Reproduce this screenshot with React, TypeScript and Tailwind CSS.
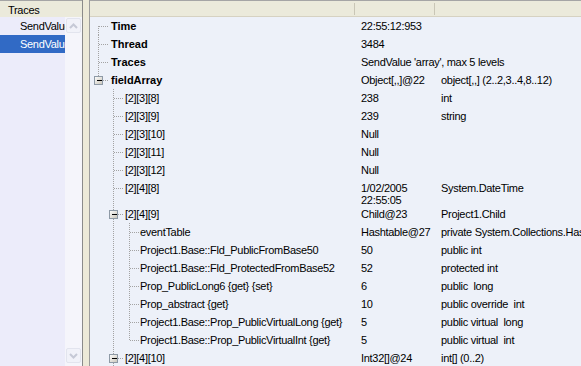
import React from 'react';

type Row = {
  label: string;
  bold?: boolean;
  level: number;
  first?: boolean;
  last?: boolean;
  box?: boolean;
  cont: boolean[];
  value?: string;
  value2?: string;
  type?: string;
};

const G = [8, 23, 39];
const TX = [21, 35, 50];

const rows: Row[] = [
  { label: 'Time', bold: true, level: 0, first: true, cont: [], value: '22:55:12:953' },
  { label: 'Thread', bold: true, level: 0, cont: [], value: '3484' },
  { label: 'Traces', bold: true, level: 0, cont: [], value: "SendValue 'array', max 5 levels" },
  { label: 'fieldArray', bold: true, level: 0, last: true, box: true, cont: [], value: 'Object[,,]@22', type: 'object[,,] (2..2,3..4,8..12)' },
  { label: '[2][3][8]', level: 1, cont: [false], value: '238', type: 'int' },
  { label: '[2][3][9]', level: 1, cont: [false], value: '239', type: 'string' },
  { label: '[2][3][10]', level: 1, cont: [false], value: 'Null' },
  { label: '[2][3][11]', level: 1, cont: [false], value: 'Null' },
  { label: '[2][3][12]', level: 1, cont: [false], value: 'Null' },
  { label: '[2][4][8]', level: 1, cont: [false], value: '1/02/2005', value2: '22:55:05', type: 'System.DateTime' },
  { label: '[2][4][9]', level: 1, box: true, cont: [false], value: 'Child@23', type: 'Project1.Child' },
  { label: 'eventTable', level: 2, cont: [false, true], value: 'Hashtable@27', type: 'private System.Collections.Hashtable' },
  { label: 'Project1.Base::Fld_PublicFromBase50', level: 2, cont: [false, true], value: '50', type: 'public int' },
  { label: 'Project1.Base::Fld_ProtectedFromBase52', level: 2, cont: [false, true], value: '52', type: 'protected int' },
  { label: 'Prop_PublicLong6 {get} {set}', level: 2, cont: [false, true], value: '6', type: 'public  long' },
  { label: 'Prop_abstract {get}', level: 2, cont: [false, true], value: '10', type: 'public override  int' },
  { label: 'Project1.Base::Prop_PublicVirtualLong {get}', level: 2, cont: [false, true], value: '5', type: 'public virtual  long' },
  { label: 'Project1.Base::Prop_PublicVirtualInt {get}', level: 2, last: true, cont: [false, true], value: '5', type: 'public virtual  int' },
  { label: '[2][4][10]', level: 1, box: true, cont: [false], value: 'Int32[]@24', type: 'int[] (0..2)' },
];

const TreeLines = ({ r, h }: { r: Row; h: number }) => {
  const y = 9;
  const gx = G[r.level];
  const dash = { stroke: '#a3a3a3', strokeWidth: 1, strokeDasharray: '1 1' };
  return (
    <svg width={TX[r.level]} height={h} className="shrink-0" shapeRendering="crispEdges">
      {r.cont.map((c, i) =>
        c ? <line key={i} x1={G[i] + 0.5} y1={0} x2={G[i] + 0.5} y2={h} {...dash} /> : null
      )}
      <line x1={gx + 0.5} y1={r.first ? y : 0} x2={gx + 0.5} y2={r.last ? y : h} {...dash} />
      <line x1={gx + 1} y1={y + 0.5} x2={gx + 10} y2={y + 0.5} {...dash} />
      {r.box && (
        <g>
          <defs>
            <linearGradient id="bx" x1="0" y1="0" x2="1" y2="1">
              <stop offset="0" stopColor="#ffffff" />
              <stop offset="1" stopColor="#c8c4b8" />
            </linearGradient>
          </defs>
          <rect x={gx - 3.5} y={y - 3.5} width={8} height={8} fill="url(#bx)" stroke="#8e9aa6" />
          <line x1={gx - 1} y1={y + 0.5} x2={gx + 4} y2={y + 0.5} stroke="#000" />
        </g>
      )}
    </svg>
  );
};

const ScrollBtn = ({ down }: { down?: boolean }) => (
  <div className="h-[17px] w-[17px] p-px">
    <div className="flex h-full w-full items-center justify-center rounded-[2px] border border-[#e2e4ee] bg-[#f1f2f9]">
      <svg width="9" height="6" viewBox="0 0 9 6">
        <polyline
          points={down ? '1,1 4.5,4.5 8,1' : '1,5 4.5,1.5 8,5'}
          fill="none"
          stroke="#c6c9d6"
          strokeWidth="2"
        />
      </svg>
    </div>
  </div>
);

export default function App() {
  return (
    <div
      className="flex h-[366px] w-[581px] overflow-hidden bg-[#ece9d8] text-[11px] text-black"
      style={{ fontFamily: '"Liberation Sans", Arial, sans-serif' }}
    >
      {/* traces list */}
      <div className="flex w-[83px] shrink-0 flex-col border-r border-[#8a8a8a]">
        <div className="h-[17px] shrink-0 border-t border-[#a5a5a5] bg-[#ebeadb] pl-[8px] pt-[3px] leading-[12px] tracking-[-0.3px]">
          Traces
        </div>
        <div className="flex flex-1">
          <div className="w-[65px] overflow-hidden bg-[#ececfa] tracking-[-0.3px]">
            <div className="h-[18px] whitespace-nowrap pl-[20px] pt-[3px] leading-[12px]">SendValue</div>
            <div className="h-[18px] whitespace-nowrap bg-[#316ac5] pl-[20px] pt-[3px] leading-[12px] text-white">
              SendValue
            </div>
          </div>
          <div className="flex w-[17px] flex-col bg-[#f5f5fb] pb-[2px]">
            <ScrollBtn />
            <div className="flex-1" />
            <ScrollBtn down />
          </div>
        </div>
      </div>

      {/* splitter */}
      <div className="w-[6px] shrink-0 bg-[#ece9d8]" />

      {/* properties tree */}
      <div className="flex flex-1 flex-col border-l border-[#9c9c9c] bg-[#edf1f9]">
        <div className="flex h-[17px] shrink-0 border-t border-b border-[#a5a5a5] border-b-[#d6d2c2] bg-[#ebeadb]">
          <div className="flex w-[265px] shrink-0 items-center justify-end">
            <div className="h-[12px] w-px bg-[#c9c6b6]" />
          </div>
          <div className="flex w-[80px] shrink-0 items-center justify-end">
            <div className="h-[12px] w-px bg-[#c9c6b6]" />
          </div>
          <div className="flex-1" />
        </div>

        {rows.map((r, i) => {
          const h = r.value2 ? 26 : 18;
          return (
            <div key={i} className={`flex shrink-0 ${r.value2 ? 'h-[26px]' : 'h-[18px]'}`}>
              <div className="flex w-[265px] shrink-0 overflow-hidden">
                <TreeLines r={r} h={h} />
                <div
                  className={`whitespace-nowrap pt-[3px] leading-[12px] ${
                    r.bold ? 'font-bold' : 'tracking-[-0.3px]'
                  }`}
                >
                  {r.label}
                </div>
              </div>
              <div className="w-[80px] shrink-0 whitespace-nowrap pl-[6px] pt-[3px] leading-[12px] tracking-[-0.3px]">
                {r.value}
                {r.value2 && <div>{r.value2}</div>}
              </div>
              <div className="flex-1 whitespace-pre pl-[6px] pt-[3px] leading-[12px] tracking-[-0.3px]">
                {r.type}
              </div>
            </div>
          );
        })}
      </div>
    </div>
  );
}
